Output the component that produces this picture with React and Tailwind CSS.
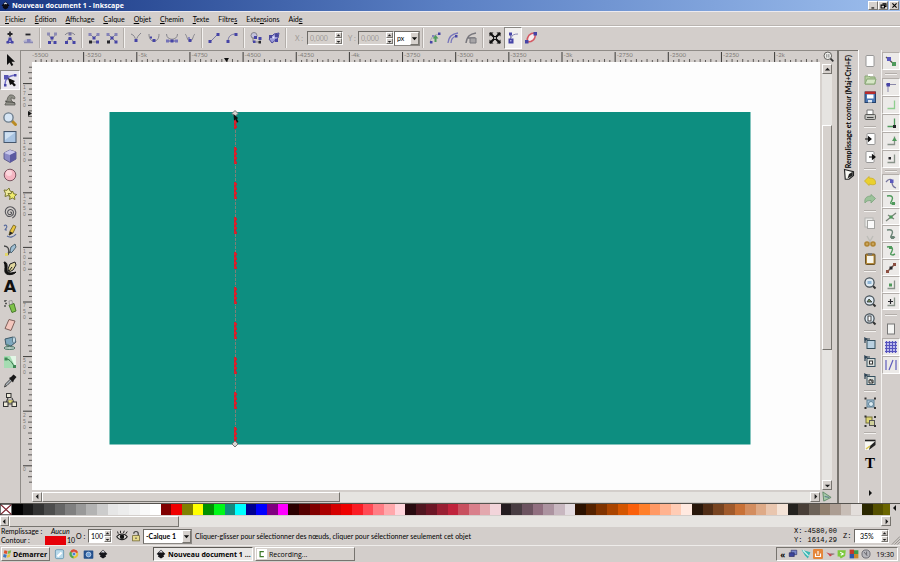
import React from "react";

const INK = "#26262b";
const NODE = "#4644a6";
const SOFT = "#85848c";
const GREEN = "#4f9a5c";

function Svg({ children, className = "h-4 w-4" }) {
  return (
    <svg viewBox="0 0 16 16" className={"shrink-0 " + className} fill="none" aria-hidden="true">
      {children}
    </svg>
  );
}

const Sq = ({ x, y, s = 3, c = NODE }) => <rect x={x} y={y} width={s} height={s} fill={c} />;
const Ln = ({ d, c = SOFT, w = 1, f = "none" }) => <path d={d} stroke={c} strokeWidth={w} fill={f} />;

const editIcons = {
  insert: <><Ln d="M8 1.500v5M5.500 4h5" c={INK} w={1.800} /><Ln d="M8 8L5 12.500h6z" c={NODE} f="#9a99cf" /><Sq x={6.500} y={7.500} /><Sq x={4.500} y={11} s={2.500} /><Sq x={9} y={11} s={2.500} /></>,
  remove: <><Ln d="M5.500 4.500h5" c={INK} w={1.800} /><path d="M3 12c1-4 9-4 10 0z" fill="#b7b5cf" /><Sq x={7} y={9} s={3.500} c="#8583bd" /><Ln d="M4 12.500h9" c="#8a89b4" w={1.500} /></>,
  breakNode: <><Ln d="M4 4l3 4M12 4l-3 4M8 9v3" /><Sq x={3} y={2.500} c="#8d8bb5" /><Sq x={10} y={2.500} c="#8d8bb5" /><Sq x={6.500} y={6.500} /><Sq x={4} y={11} /><Sq x={9.500} y={11} /></>,
  join: <><Ln d="M3 5c2-3 8-3 10 0M5 11l3-4 3 4" /><Sq x={6.500} y={2.500} c="#77759f" /><Sq x={6.500} y={7} /><Sq x={3} y={11} /><Sq x={10.500} y={11} /></>,
  joinSeg: <><Ln d="M4 4l3 3M12 4L9 7M5 12h6" c={SOFT} /><Sq x={2.500} y={3} c="#8482b8" /><Sq x={10.500} y={3} c="#8482b8" /><Sq x={6.500} y={6.500} /><Sq x={3} y={10.500} c={INK} /><Sq x={10} y={10.500} /></>,
  delSeg: <><Ln d="M4 4l8 8M12 4l-8 8" c={SOFT} /><Sq x={2.500} y={3} c="#8482b8" /><Sq x={10.500} y={3} c="#8482b8" /><Sq x={6.500} y={6.500} /><Sq x={3} y={10.500} c={INK} /><Sq x={10.500} y={10.500} /></>,
  cusp: <><Ln d="M3 4c3 1 4 3 5 7 1-4 2-5 5-8" /><Sq x={6.500} y={9} /></>,
  smooth: <><Ln d="M3 4c0 5 2 7 5 7s5-2 5-7" /><Sq x={6.500} y={9} /><Sq x={4} y={6.500} s={2} /></>,
  symmetric: <><Ln d="M2.500 4c0 7 11 7 11 0" /><Ln d="M3 11h10" c={NODE} /><Sq x={2} y={9.500} c="#7472b8" /><Sq x={6.500} y={9.500} /><Sq x={11} y={9.500} c="#7472b8" /></>,
  auto: <><Ln d="M3 4c2 1 2 7 5 7s3-6 5-7" /><Sq x={6.500} y={9} /><Sq x={6} y={7} s={2} c="#8b89bf" /></>,
  line: <><Ln d="M4 12l8-8" c="#7b79a5" /><Sq x={2.500} y={10} /><Sq x={10.500} y={3} /></>,
  curve: <><Ln d="M4 12c0-6 3-8 8-8" c="#7b79a5" /><Sq x={2.500} y={10} /><Sq x={10.500} y={3} /></>,
  objPath: <><circle cx="6" cy="5.500" r="3" fill="#c4c3dd" stroke={SOFT} /><Ln d="M5 7v5h7V8" c={SOFT} /><Sq x={6} y={6} /><Sq x={10.500} y={7} /><Sq x={5} y={10.500} s={2.500} /><Sq x={10.500} y={11} s={2.500} c={INK} /></>,
  strokePath: <><path d="M3 9l5-5 5-1-1 5-6 5z" fill="#9b9ad6" stroke="#4a489c" /><Sq x={3} y={5} s={3} c="#4a489c" /><Sq x={9} y={9} s={3} /><Sq x={9} y={4} s={3} c="#4a489c" /><Sq x={6.500} y={6.500} s={2} c="#e8e8ff" /></>,
  clipEdit: <><Ln d="M3 13c1-6 3-8 10-9" c="#a2a1b0" /><path d="M8.500 5l3 3.500h-2V12h-2V8.500h-2z" fill={GREEN} /><Sq x={3} y={11} s={2.500} /><Sq x={11} y={2.500} s={2.500} /><Sq x={5} y={5} s={2} c="#8583bd" /></>,
  maskEdit: <><Ln d="M3 13C4 6 7 4 13 3M6 13c0-4 2-6 5-7" c="#7775bb" w={1.300} /><Sq x={10} y={5} s={2.500} /></>,
  lpe: <><Ln d="M3 13C4 6 7 4 13 3M5 8h7" c="#77767c" w={1.500} /><path d="M7 8h6v5H7z" fill="#a6a4a6" stroke="#77767c" /></>,
  transform: <><path d="M3 3l3.500 3.500M13 3L9.500 6.500M3 13l3.500-3.500M13 13L9.500 9.500" stroke="#111" strokeWidth="2.200" /><path d="M2.500 2.500h4l-4 4zM13.500 2.500h-4l4 4zM2.500 13.500h4l-4-4zM13.500 13.500h-4l4-4z" fill="#111" /><Sq x={6} y={6} s={4} c="#111" /><Sq x={7.200} y={7.200} s={1.600} c="#fff" /></>,
  handles: <><Ln d="M6 8c1-3 3-4 7-4M5.500 4v8" c="#8886b6" /><Sq x={4} y={2.500} s={3} /><Sq x={3.500} y={8.500} s={5} /><Sq x={5} y={10} s={1.500} c="#a9a8e0" /></>,
  outline: <><path d="M4 12c0-6 2-9 8-9 1 6-2 9-8 9z" fill="#f6eef0" stroke="#d45a64" strokeWidth="1.600" /><Sq x={2} y={10} s={3.500} /><Sq x={10.500} y={2} s={3.500} /></>,
};

const toolIcons = [
  ["Sélecteur", <path d="M5 2v11l2.600-2.500L9.500 14l1.800-.9-1.800-3.300H13z" fill="#111" />],
  ["Nœuds", <><Ln d="M3 14C3 8 4 4 14 3" c="#6f6dc4" w={1.400} /><Sq x={2} y={3} s={4.500} c="#5654b4" /><Sq x={12} y={2} s={2.500} /><Sq x={2} y={12} s={2.500} /><path d="M6 6l7 3-1.500 1.500L14 13l-2 1.500-2-2.500-2 1z" fill="#111" /></>],
  ["Ajuster", <><path d="M3 12c2-1 2-8 5-9 3-.5 6 1.500 4.500 4-1.500 0-2-1.500-3.500-1 0 3 1 4 4 5v2H3z" fill="#8f8f87" stroke="#5c5c56" strokeWidth=".8" /><Ln d="M3 9c3 2 6 0 10 2" c="#4c4c47" /></>],
  ["Zoom", <><path d="M9.500 9.500l4 4" stroke="#b98a22" strokeWidth="3" strokeLinecap="round" /><circle cx="6.500" cy="6.500" r="4.600" fill="#d6e5f4" stroke="#6d7d8c" strokeWidth="1.400" /></>],
  ["Rectangle", <><rect x="2" y="2.500" width="12" height="11" fill="#a9c4e2" stroke="#45566c" /><path d="M3 3.500h10L3 11z" fill="#cfe0f1" /></>],
  ["Boîte 3D", <><path d="M2 5l6-3 6 2v7l-6 3.500L2 11z" fill="#8c8bc6" stroke="#4c4b80" strokeWidth=".8" /><path d="M2 5l6-3 6 2-6 3z" fill="#c9c8ec" /><path d="M8 7l6-3v7l-6 3.500z" fill="#5a59a0" /></>],
  ["Ellipse", <><circle cx="8" cy="8" r="5.800" fill="#f5b6c2" stroke="#7b5560" /><circle cx="7" cy="6" r="3" fill="#fbd6dc" /></>],
  ["Étoile", <><path d="M2 4l3 .3L7 2l1 3 2.500 1-2 2 .3 3L6 9.500 3 10.500l.5-3z" fill="#eeea9d" stroke="#7a7730" /><path d="M6 7.500l3 .2 1.500-2.700 1.200 2.800 3 .7-2.300 2 .5 3-2.600-1.500L7.500 13.500l.6-3z" fill="#f0ec6d" stroke="#7a7730" /></>],
  ["Spirale", <path d="M8 8.500c1-1.500 2.500.5 1 1.700-2 1.300-4-.7-3.200-2.900C7 4.500 11 5 11.500 8c.4 3.500-3.500 5.500-6 4C2.500 10 2.500 5.500 5.500 3.500 9 1.500 13.500 4 13.800 8c0 3-1.500 5-3.500 6" stroke="#55555a" strokeWidth="1.100" />],
  ["Crayon", <><Ln d="M2 3c2-2 4 0 2 2.500-1 1-2 1.500 1 1.500M5 13c3 2 7 1 9-2" c="#5a6c9c" w={1.200} /><path d="M7 12l1-4 3.500-6L14 3.500 11 10z" fill="#e9c53f" stroke="#6b5a1c" strokeWidth=".8" /><path d="M7 12.500l1-4 3 1.500z" fill="#222" /></>],
  ["Bézier", <><Ln d="M2 4c4 0 6 3 4 9M3 13c4 0 5-4 7-5" c="#484848" w={1.300} /><path d="M8 9l1-4 4-3 1 3-3 4-2 2z" fill="#9fbfd4" stroke="#4f6470" /><Sq x={3} y={11} c="#e2d46a" /></>],
  ["Calligraphie", <><path d="M2 2c4 0 3 5 3 8 1 4 5 3 9 2-2 3-10 4-11 0-.6-3 1-6-1-10z" fill="#111" stroke="#111" /><path d="M6 9l2-5 5-2 1 3-3 5-4 2z" fill="#ded49c" stroke="#222" /><path d="M7 11l3-4" stroke="#222" /></>],
  ["Texte", "A"],
  ["Aérographe", <><path d="M7 7l5-1.500 2 7.500-4 1.500z" fill="#7fc24a" stroke="#487a2c" /><path d="M7 3l3-.5.5 3L7.500 7z" fill="#d7d7d2" stroke="#777" strokeWidth=".6" /><Ln d="M2 3h2M3 5.500h2M2 8h2M4 2v1" c="#555" w={1.400} /></>],
  ["Gomme", <path d="M7 2.500l6 1.500-4 9.500-6-2z" fill="#f3c6bd" stroke="#7d5f5a" />],
  ["Seau", <><path d="M3 4l8-2 3 5-5 4-5-1z" fill="#7fa8bd" stroke="#3d5866" /><ellipse cx="12" cy="5" rx="1.600" ry="3.200" fill="#c4dce7" stroke="#3d5866" strokeWidth=".7" /><Ln d="M6 9c-1 2 1 4 1 4" c="#5f8d7a" w={1.600} /><ellipse cx="7.500" cy="13" rx="5.500" ry="1.500" fill="#b9cfc6" stroke="#4c7466" /></>],
  ["Dégradé", <><rect x="2" y="2" width="12" height="12" fill="#a5dcb2" /><path d="M8 2h6v12z" fill="#e3f6e6" /><Ln d="M4 5c3 0 5 2 8 7" c="#2f7146" /><Sq x={2.500} y={3.500} c="#3f8756" /><Sq x={11} y={11} c="#3f8756" /></>],
  ["Pipette", <><path d="M2.500 14l1-3 5-5 1.500 1.500-5 5z" fill="#aeb7bd" stroke="#444" /><path d="M7 5l2-1 2.500-2.500L14.500 4 12 7l-1 2.500z" fill="#191919" /></>],
  ["Connecteur", <><Ln d="M6 6L4 11M10 6l2 5M6 12h4" c="#444" w={1.200} /><rect x="4.500" y="1.500" width="4.500" height="4" fill="#ece9d8" stroke="#333" /><path d="M6 8h5v3H6z" fill="#e9e070" stroke="#666" strokeWidth=".6" /><rect x="1.500" y="10" width="4.500" height="4.500" fill="#ece9d8" stroke="#333" /><rect x="10" y="10" width="4.500" height="4.500" fill="#ece9d8" stroke="#333" /></>],
];

const Page = ({ x = 4, y = 2.500 }) => <rect x={x} y={y} width="8" height="11" rx="1" fill="#fdfdfd" stroke="#8d8d8d" strokeWidth=".9" />;
const Lens = ({ children }) => (
  <><path d="M11 11l2.500 2.500" stroke="#333" strokeWidth="2" /><circle cx="7.500" cy="7.500" r="4.600" fill="#dfeaf2" stroke="#3f4a52" strokeWidth="1.200" />{children}</>
);
const Clone = ({ children, c = "#b9d0e0" }) => (
  <><path d="M3 8V4h5" stroke="#2c4253" strokeWidth="1.200" /><path d="M2 2l4 2-3 2z" fill="#2c4253" /><rect x="5" y="5.500" width="8" height="8" fill={c} stroke="#35505f" />{children}</>
);

const commandIcons = [
  ["Nouveau", <Page />],
  ["Ouvrir", <><path d="M3 5h4l1 1h5v7H3z" fill="#b7cf9f" stroke="#8aa878" /><path d="M5 8h9l-1.500 5H3z" fill="#d6e6c6" stroke="#8aa878" /><path d="M6 3h5v2H6z" fill="#fff" /></>],
  ["Enregistrer", <><rect x="3" y="3" width="10.500" height="10.500" fill="#4b76b4" stroke="#24416b" /><rect x="3" y="2.500" width="10.500" height="2.500" fill="#b82a2a" /><rect x="5" y="5.500" width="6.500" height="4" fill="#fff" /><rect x="6" y="11" width="4" height="2.500" fill="#dfe7ef" /></>],
  ["Imprimer", <><path d="M5 3h6v5H5z" fill="#fff" stroke="#777" /><rect x="3" y="7.500" width="10.500" height="5" rx="1" fill="#c4c4c0" stroke="#5b5b58" /><Ln d="M5 10.500h6.500" c="#444" /></>],
  null,
  ["Importer", <><Page x={5} /><path d="M3 8h6M6.500 6v4l2.500-2z" stroke="#111" strokeWidth="1.200" fill="#111" /></>],
  ["Exporter", <><Page x={4} /><path d="M7 8h5M10.500 6v4l2.500-2z" stroke="#111" strokeWidth="1.200" fill="#111" /></>],
  null,
  ["Annuler", <path d="M2.500 8L7 3.500V5c4 0 7 1 6.500 6C12 12 10 12 7 11v1.500z" fill="#ead02e" stroke="#c9ae2a" strokeWidth=".8" />],
  ["Refaire", <path d="M13.500 7.500L9 3.500V5c-4 0-7 2-6 7 1-2 3-2.500 6-2.500V12z" fill="#9cc29a" stroke="#7ba37c" strokeWidth=".8" />],
  null,
  ["Copier", <><rect x="3" y="3" width="8" height="9" fill="#e9e9e7" stroke="#b4b4b2" /><rect x="5.500" y="5.500" width="7" height="8" fill="#fafafa" stroke="#a4a4a2" /></>],
  ["Couper", <><Ln d="M5 3l4 7M11 3L7 10" c="#bdbdb8" w={1.400} /><circle cx="5" cy="11" r="2" fill="#c9a35a" stroke="#b08432" strokeWidth="1.600" /><circle cx="11" cy="11" r="2" fill="#c9a35a" stroke="#b08432" strokeWidth="1.600" /></>],
  ["Coller", <><rect x="3.500" y="3" width="9.500" height="10.500" rx="1" fill="#b4893a" stroke="#6b5225" /><rect x="5" y="5" width="6.500" height="7" fill="#f6f4ea" /><rect x="6" y="2" width="4" height="2.500" fill="#777" /></>],
  null,
  ["Zoom sélection", <Lens><rect x="5.500" y="6" width="4" height="3" fill="#8fb4d4" /></Lens>],
  ["Zoom dessin", <Lens><path d="M5 9l2-3 3 3z" fill="#6f8f5c" stroke="#333" strokeWidth=".8" /></Lens>],
  ["Zoom page", <Lens><rect x="6" y="5" width="3" height="5" fill="#fff" stroke="#444" /></Lens>],
  null,
  ["Dupliquer", <Clone />],
  ["Cloner", <Clone c="#d8dcd8"><rect x="7.500" y="8" width="3" height="3" fill="#fff" stroke="#333" /></Clone>],
  ["Délier", <Clone c="#d8dcd8"><path d="M7 12V9h4v3z" stroke="#333" /><path d="M8 8l3 4" stroke="#333" /></Clone>],
  null,
  ["Grouper", <><rect x="5" y="5" width="7" height="7" fill="#a9c4d8" stroke="#5d7f94" /><circle cx="9" cy="9" r="2.500" fill="#dcebf2" stroke="#5d7f94" /><Sq x={2.500} y={2.500} s={2} c="#333" /><Sq x={12} y={2.500} s={2} c="#333" /><Sq x={2.500} y={12} s={2} c="#333" /><Sq x={12} y={12} s={2} c="#333" /></>],
  ["Dégrouper", <><rect x="4" y="4" width="6" height="6" fill="#ddd574" stroke="#77723a" /><rect x="7.500" y="7.500" width="5" height="5" fill="#cfcf9a" stroke="#555" /><Sq x={2.500} y={2.500} s={2} c="#333" /><Sq x={12} y={3} s={2} c="#333" /><Sq x={2.500} y={12} s={2} c="#333" /><Sq x={12} y={12} s={2} c="#333" /></>],
  null,
  ["Remplissage", <><path d="M3 4h10v3l-5 6H3z" fill="#f7f7f2" /><path d="M13.500 4v4L7 13l1-4z" fill="#222" /><path d="M3 3.500h10.500" stroke="#222" strokeWidth="1.600" /><path d="M4 12l4-3" stroke="#d8c34a" strokeWidth="1.500" /></>],
  ["Texte", "T"],
];

const Corner = ({ a = GREEN, children }) => (
  <><Ln d="M11.500 3.500v8H4.500" c="#89938a" w={1.300} />{children || <Sq x={10} y={10} s={3} c={a} />}</>
);
const Swoop = ({ c = GREEN, x, y }) => (
  <><Ln d="M4 4c6-1 6 2 5 4-1 2.500-3 4 1 4l2-1" c={c} w={1.400} /><Sq x={x} y={y} s={3} c={c} /></>
);

const snapTop = [
  ["Boîtes", <><Ln d="M3 5.500h10M5 4v9" c="#8b89aa" /><Sq x={3.500} y={4} s={3.500} /></>],
  ["Bords", <Ln d="M11.500 3.500v8H4.500" c="#8fce8f" w={1.300} />],
  ["Coins", <><Ln d="M11.500 3.500v8H4.500" c={GREEN} w={1.300} /><Sq x={10} y={10} s={3} c={INK} /></>],
  ["Milieux", <Corner><path d="M11.500 4l2.500 4H9z" fill={GREEN} /></Corner>],
  ["Centres", <Corner><Sq x={5.500} y={6} s={2.500} c={INK} /></Corner>],
];
const snapMid = [
  ["Nœuds", <><Ln d="M3 7c3-4 6-3 6 0 0 3 1 5 4 6" c="#76759c" w={1.300} /><Sq x={7} y={4.500} s={3.500} c="#5b59bd" /></>],
  ["Chemins", <Swoop x={9} y={10} />],
  ["Intersections", <><Ln d="M3 12L13 4M5 6l6 4" c="#798579" w={1.300} /><Sq x={6.500} y={6.500} s={3} c={GREEN} /></>],
  ["Points de rebroussement", <Swoop x={8} y={10} c="#6c8577" />],
  ["Nœuds doux", <Swoop x={6} y={3} c={GREEN} />],
  ["Milieux de ligne", <><Ln d="M4 12l8-8" c="#7c5c50" w={1.500} /><Sq x={3} y={10} s={3} c="#8c4f42" /><Sq x={10} y={3} s={3} c="#8c4f42" /><Sq x={6.500} y={6.500} s={3} c={INK} /></>],
  ["Centres d'objet", <Corner><Sq x={6} y={6.500} s={3} c={GREEN} /></Corner>],
  ["Centres de rotation", <Corner><Ln d="M7.500 5v5M5 7.500h5" c={INK} w={1.200} /></Corner>],
];

const bevelUp = "border border-t-white border-l-white border-r-[#77746f] border-b-[#77746f] bg-[#d6d1cd]";

function IconButton({ label, children, className = "" }) {
  return (
    <button type="button" aria-label={label} className={"flex shrink-0 items-center justify-center " + className}>
      {children}
    </button>
  );
}

function ToolGroup({ names }) {
  return (
    <div className="flex">
      {names.map((n) => (
        <IconButton key={n} label={n} className={n === "handles" ? "h-[22px] w-[18px] border border-b-white border-r-white border-l-[#8b8884] border-t-[#8b8884] bg-[#f1efee]" : "h-[22px] w-[18px]"}>
          <Svg>{editIcons[n]}</Svg>
        </IconButton>
      ))}
    </div>
  );
}

const VSep = () => <div className="mx-[2px] h-5 w-[2px] shrink-0 border-l border-r border-l-[#b3aeaa] border-r-[#f4f2f0]" />;
const HSep = ({ className = "my-[2px]" }) => <div className={"h-[2px] w-3 shrink-0 border-t border-b border-t-[#b3aeaa] border-b-[#f4f2f0] " + className} />;

function Arrow({ dir, label, className = "" }) {
  const d = { up: "M1 5l3-3 3 3z", down: "M1 3l3 3 3-3z", left: "M5 1L2 4l3 3z", right: "M3 1l3 3-3 3z" }[dir];
  return (
    <button type="button" aria-label={label} className={"flex shrink-0 items-center justify-center " + bevelUp + " " + className}>
      <svg viewBox="0 0 8 8" className="h-[7px] w-[7px]" aria-hidden="true"><path d={d} fill="#1b1b1b" /></svg>
    </button>
  );
}

function Spin({ id, value, className, muted }) {
  return (
    <div className={"flex h-[14px] border border-t-[#6d6a66] border-l-[#6d6a66] border-b-white border-r-white " + (muted ? "bg-[#d6d1cd]" : "bg-white")}>
      <input id={id} defaultValue={value} className={"min-w-0 bg-transparent pl-[2px] text-[7px] leading-3 outline-none " + (muted ? "text-[#9d9995] " : "text-black ") + className} />
      <div className="flex w-[7px] flex-col">
        <Arrow dir="up" label="Augmenter" className="h-[6px] w-full overflow-hidden" />
        <Arrow dir="down" label="Diminuer" className="h-[6px] w-full overflow-hidden" />
      </div>
    </div>
  );
}

function Drop({ id, label, options, className }) {
  return (
    <div className="flex h-[15px] border border-t-[#6d6a66] border-l-[#6d6a66] border-b-[#8b8884] border-r-[#8b8884] bg-white">
      <select id={id} aria-label={label} className={"appearance-none bg-white pl-[2px] text-[7px] leading-3 outline-none " + className}>
        {options.map((o) => <option key={o}>{o}</option>)}
      </select>
      <span className={"flex w-[9px] items-center justify-center " + bevelUp}>
        <svg viewBox="0 0 8 8" className="h-[7px] w-[7px]" aria-hidden="true"><path d="M1 2.500h6L4 6z" fill="#111" /></svg>
      </span>
    </div>
  );
}

const MENUS = [["F", "ichier"], ["É", "dition"], ["A", "ffichage"], ["C", "alque"], ["O", "bjet"], ["C", "hemin"], ["T", "exte"], ["", "Filtre", "s"], ["", "Exte", "n", "sions"], ["", "Aid", "e"]];

const H_LABELS = ["-5500", "-5250", "-5k", "-4750", "-4500", "-4250", "-4k", "-3750", "-3500", "-3250", "-3k", "-2750", "-2500", "-2250", "-2k"];
const V_LABELS = ["1750", "1500", "1250", "1000", "750", "500", "250", "0"];

function HorizontalRuler() {
  const step = 53.15;
  const ticks = Array.from({ length: 149 }, (_, i) => ({ x: -1.500 + (i * step) / 10, i }));
  return (
    <svg className="h-3 w-full" aria-hidden="true">
      {ticks.map(({ x, i }) => (
        <path key={i} d={`M${x} ${i % 10 === 0 ? 1 : i % 2 === 0 ? 8 : 9}V12`} stroke="#3b3a38" strokeWidth={i % 10 === 0 ? 1 : 0.8} />
      ))}
      {H_LABELS.map((t, i) => (
        <text key={t} x={i * step} y="6" fontSize="6" fill="#7d7a76">{t}</text>
      ))}
      <path d="M192 7h5l-2.500 4z" fill="#111" />
    </svg>
  );
}

function VerticalRuler() {
  const step = 54.600;
  const ticks = Array.from({ length: 84 }, (_, i) => ({ y: -33 + (i * step) / 10, i })).filter((t) => t.y > 0 && t.y < 428);
  return (
    <svg className="h-full w-[11px]" aria-hidden="true">
      {ticks.map(({ y, i }) => (
        <path key={i} d={`M${i % 10 === 0 ? 2 : i % 2 === 0 ? 7 : 8} ${y}H11`} stroke="#3b3a38" strokeWidth={i % 10 === 0 ? 1 : 0.8} />
      ))}
      {V_LABELS.map((t, n) =>
        t.split("").map((ch, k) => (
          <text key={n + "-" + k} x="2" y={27 + n * step + k * 6} fontSize="5" fontFamily="Liberation Sans, sans-serif" fill="#7a7773">{ch}</text>
        ))
      )}
      <path d="M7 49v5l4-2.500z" fill="#111" />
    </svg>
  );
}

function Drawing() {
  const dashes = Array.from({ length: 10 }, (_, i) => i);
  return (
    <svg className="h-full w-full" role="img" aria-label="Dessin">
      <rect x="77.500" y="50" width="641" height="332.500" fill="#0d8e80" />
      <path d="M203.500 52V382" stroke="#7d7f76" strokeWidth="1" strokeDasharray="3 1" />
      {dashes.map((i) => {
        const y = 50 + i * 35;
        const top = i === 0 ? y + 8 : y;
        const h = i === 0 ? 9 : i === 9 ? 16 : 17;
        return (
          <g key={i}>
            <rect x="202" y={top} width="2" height={h} fill="#cf1f2b" />
            <path d={`M204.500 ${top + 1}V${top + h}`} stroke="#cf1f2b" strokeDasharray="2.500 2" />
            <path d={`M203 ${top + 1}V${top + h}`} stroke="#e8262e" strokeDasharray="2 2.500" />
          </g>
        );
      })}
      <path d="M203 48.500l3 3-3 3-3-3z" fill="#d6d6d2" stroke="#77777a" />
      <path d="M203 379l3 3-3 3-3-3z" fill="#d6d6d2" stroke="#77777a" />
      <path d="M201.500 52l4.500 4-1 1 1.500 3-1.500.5-1.500-3-1.500 1z" fill="#111" />
    </svg>
  );
}

const PALETTE = ["#000000", "#1a1a1a", "#333333", "#4d4d4d", "#666666", "#808080", "#999999", "#b3b3b3", "#cccccc", "#e6e6e6", "#ececec", "#f2f2f2", "#f9f9f9", "#ffffff",
  "#800000", "#f00000", "#808000", "#ffff00", "#009000", "#00f818", "#128c80", "#00ffff", "#000090", "#0000ff", "#800080", "#ff00ff",
  "#2b0000", "#550000", "#800000", "#aa0000", "#d40000", "#ee0000", "#fa1c24", "#ff4a55", "#ff7d85", "#ffa8ac", "#ffd5dc",
  "#280b10", "#501620", "#6c1626", "#991f33", "#c0233c", "#c8505f", "#d97f8b", "#e3a8ae", "#f2d4da",
  "#241c20", "#483c42", "#6c5360", "#916f80", "#ac93a0", "#c8b7c0", "#e3dbe0",
  "#2b1100", "#552200", "#803300", "#aa4400", "#d45500", "#fa5f0a", "#ff7f2a", "#ff9965", "#ffb390", "#ffccb5", "#ffe9e0",
  "#28170b", "#502d16", "#784421", "#a05a2c", "#c87137", "#d38d5f", "#deaa87", "#e9c6af", "#f4e3d7",
  "#24221f", "#483e37", "#6c6258", "#91806f", "#ac9d93", "#c8beb7", "#e3dedb",
  "#2b2800", "#555000"];

function ColumnGroup({ items, cell }) {
  return items.map((it, i) =>
    it === null ? <HSep key={i} /> : (
      <IconButton key={i} label={it[0]} className={cell}>
        {typeof it[1] === "string"
          ? <span className="font-['Liberation_Serif',serif] text-[15px] font-bold leading-4 text-black">{it[1]}</span>
          : <Svg>{it[1]}</Svg>}
      </IconButton>
    )
  );
}

const snapCell = "w-full border border-t-[#b3aeaa] border-l-[#b3aeaa] border-b-white border-r-white bg-[#eceae8]";

function TitleBar() {
  return (
    <header className="flex h-[11px] shrink-0 items-center bg-linear-to-r from-[#1a3783] via-[#5b80c4] to-[#9cbdec] pl-px pr-px text-white">
      <svg viewBox="0 0 16 16" className="h-[9px] w-[9px]" aria-hidden="true"><path d="M8 1l7 7-3 2 1 2-5 3-5-3 1-2-3-2z" fill="#0b0b12" /><path d="M8 2l3 3-2 1-1-1-2 1-1-1z" fill="#dfe6f2" /></svg>
      <h1 className="ml-[2px] font-['Open_Sans',sans-serif] text-[7px] font-bold leading-[10px]">Nouveau document 1 - Inkscape</h1>
      <div className="ml-auto flex">
        {[["Réduire", "M2 8.500h4"], ["Restaurer", "M3.500 2.500h5v4h-2M1.500 4.500h5v4h-5z"], ["Fermer", "M2 2l6 6M8 2L2 8"]].map(([n, d]) => (
          <button key={n} type="button" aria-label={n} className={"flex h-[9px] w-[10px] items-center justify-center last:ml-px " + bevelUp}>
            <svg viewBox="0 0 10 10" className="h-[7px] w-[7px]" aria-hidden="true"><path d={d} stroke="#000" strokeWidth="1.600" fill="none" /></svg>
          </button>
        ))}
      </div>
    </header>
  );
}

function Canvas() {
  return (
    <section className="flex min-w-0 flex-1 flex-col border-l border-t border-[#8f8b87]">
      <div className="flex h-[11px] shrink-0">
        <div className="w-[11px] shrink-0" />
        <div className="min-w-0 flex-1 overflow-hidden"><HorizontalRuler /></div>
        <IconButton label="Zoom lié" className="w-[17px]">
          <svg viewBox="0 0 16 16" className="h-[11px] w-[11px]" aria-hidden="true"><circle cx="7" cy="7" r="5.500" fill="#efefec" stroke="#55534f" strokeWidth="1.300" /><path d="M11 11l4 4" stroke="#333" strokeWidth="2.500" /><path d="M5.500 4.500v5M8.500 4.500v5" stroke="#555" /></svg>
        </IconButton>
      </div>
      <div className="flex min-h-0 flex-1">
        <div className="w-[11px] shrink-0 overflow-hidden"><VerticalRuler /></div>
        <div className="min-w-0 flex-1 bg-[#fdfdfd]"><Drawing /></div>
        <div className="flex w-[17px] flex-col items-center bg-[#d6d1cd] pl-[2px] pr-[5px] pt-[2px]">
          <Arrow dir="up" label="Défiler vers le haut" className="h-[10px] w-full" />
          <div className="flex w-full flex-1 flex-col bg-[#e6e4e1]">
            <div className="flex-[51]" />
            <div className={"flex-[225] " + bevelUp} />
            <div className="flex-[131]" />
          </div>
          <Arrow dir="down" label="Défiler vers le bas" className="h-[10px] w-full" />
        </div>
      </div>
      <div className="flex h-[13px] shrink-0 items-center">
        <div className="w-[11px] shrink-0" />
        <Arrow dir="left" label="Défiler à gauche" className="h-[10px] w-[10px]" />
        <div className="flex h-[10px] flex-1 bg-[#e6e4e1]">
          <div className={"flex-[297] " + bevelUp} />
          <div className="flex-[471]" />
        </div>
        <Arrow dir="right" label="Défiler à droite" className="h-[10px] w-[10px]" />
        <IconButton label="Gestion des couleurs" className="w-[17px] pr-[4px]">
          <svg viewBox="0 0 12 12" className="h-[11px] w-[11px]" aria-hidden="true"><path d="M2 1l9 6-8 4z" fill="#a5c9a8" stroke="#5f8a68" /><path d="M4 6l5 1" stroke="#4e6b85" /></svg>
        </IconButton>
      </div>
    </section>
  );
}

export default function App() {
  return (
    <div className="flex h-screen w-full flex-col overflow-hidden bg-[#d3cecb] font-['Lato','Noto_Sans',sans-serif] text-[7px] leading-[9px] text-black">
      <TitleBar />

      <nav className="flex h-[15px] shrink-0 items-center gap-[9px] border-b border-t border-b-[#b9b4b0] border-t-[#eceaf0] pl-[5px] pt-px">
        {MENUS.map((m, i) => (
          <button key={i} type="button" className="shrink-0">
            {m[0] && <u>{m[0]}</u>}{m[1]}{m[2] && <u>{m[2]}</u>}{m[3]}
          </button>
        ))}
      </nav>

      <div className="flex h-6 shrink-0 items-center border-t border-white pb-px pl-px">
        <ToolGroup names={["insert", "remove"]} /><VSep />
        <ToolGroup names={["breakNode", "join"]} /><VSep />
        <ToolGroup names={["joinSeg", "delSeg"]} /><VSep />
        <ToolGroup names={["cusp", "smooth", "symmetric", "auto"]} /><VSep />
        <ToolGroup names={["line", "curve"]} /><VSep />
        <ToolGroup names={["objPath", "strokePath"]} /><VSep />
        <label htmlFor="pos-x" className="w-[18px] pl-[6px] text-[#9d9995]">X :</label>
        <Spin id="pos-x" value="0,000" muted className="w-[27px]" />
        <label htmlFor="pos-y" className="w-[15px] pl-[5px] text-[#9d9995]">Y :</label>
        <Spin id="pos-y" value="0,000" muted className="w-[27px]" />
        <Drop id="unit" label="Unité" options={["px", "mm", "cm"]} className="w-[15px]" />
        <VSep />
        <ToolGroup names={["clipEdit", "maskEdit", "lpe"]} /><VSep />
        <ToolGroup names={["transform", "handles", "outline"]} />
      </div>

      <main className="flex min-h-0 flex-1">
        <aside className="w-5 shrink-0 border-t border-[#b9b4b0]">
          <div className="flex h-[358px] flex-col">
            {toolIcons.map(([name, art], i) => (
              <button key={name} type="button" aria-label={name} className={"flex min-h-0 flex-1 items-center justify-center " + (i === 1 ? "border border-b-white border-r-white border-l-[#8b8884] border-t-[#8b8884] bg-[#ebe9f0]" : "")}>
                {typeof art === "string"
                  ? <span className="font-['DejaVu_Sans',sans-serif] text-[16px] font-bold leading-4 text-[#111]">{art}</span>
                  : <Svg>{art}</Svg>}
              </button>
            ))}
          </div>
        </aside>

        <Canvas />

        <aside className="flex w-[21px] shrink-0 flex-col items-center border-l-2 border-t border-l-[#77746f] border-t-[#77746f] pt-[4px]">
          <h2 className="rotate-180 whitespace-nowrap font-bold [writing-mode:vertical-rl]">Remplissage et contour (Maj+Ctrl+F)</h2>
          <Svg className="h-3 w-3"><path d="M2 2l12 3v5l-6 5H3z" fill="#f7f7f2" stroke="#222" strokeWidth="1.500" /><path d="M13 5v5l-7 4 2-6z" fill="#222" /></Svg>
        </aside>

        <aside className="flex w-[23px] shrink-0 flex-col items-center border-l border-l-white pt-[2px]">
          <ColumnGroup items={commandIcons} cell="h-[18px] w-5" />
          <button type="button" aria-label="Plus de commandes" className="mt-auto mb-[6px]">
            <svg viewBox="0 0 8 8" className="h-2 w-2" aria-hidden="true"><path d="M3 1l3 3-3 3z" fill="#111" /></svg>
          </button>
        </aside>

        <aside className="flex w-[19px] shrink-0 flex-col items-center border-l border-l-[#f4f2f0] pt-[2px]">
          <IconButton label="Magnétisme" className={"h-[18px] " + snapCell}>
            <Svg><Ln d="M3 4l9 8" c="#55534f" w={1.300} /><Sq x={4} y={4} s={4} c="#5b59bd" /><Sq x={9} y={9} s={4} c={GREEN} /></Svg>
          </IconButton>
          <HSep className="my-[3px]" />
          <ColumnGroup items={snapTop} cell={"h-[18px] " + snapCell} />
          <HSep className="my-[2px]" />
          <ColumnGroup items={snapMid} cell={"h-[17px] " + snapCell} />
          <HSep className="my-[4px]" />
          <IconButton label="Bordure de page" className="h-[18px] w-full"><Svg><rect x="4.500" y="3" width="7" height="10" fill="#f5f5f3" stroke="#777" /></Svg></IconButton>
          <IconButton label="Grilles" className={"h-[18px] " + snapCell}>
            <Svg><rect x="2.500" y="2.500" width="11" height="11" fill="#c9c8f2" /><path d="M3.500 2v12M6.500 2v12M9.500 2v12M12.500 2v12M2 3.500h12M2 6.500h12M2 9.500h12M2 12.500h12" stroke="#5553bd" strokeWidth="1.200" /></Svg>
          </IconButton>
          <IconButton label="Guides" className={"h-[18px] " + snapCell}>
            <Svg><path d="M3 3v10M13 3v10M6 13l4-10" stroke="#5f5dbd" strokeWidth="1.200" /></Svg>
          </IconButton>
        </aside>
      </main>

      <div className="flex h-[12px] shrink-0 border-t border-[#55534f]">
        <button type="button" aria-label="Aucune couleur" className="w-3 shrink-0 bg-white">
          <svg viewBox="0 0 12 11" className="h-[11px] w-3" aria-hidden="true"><path d="M0 0l12 11M12 0L0 11" stroke="#7b1f2b" strokeWidth="1.200" /><rect x=".5" y=".5" width="11" height="10" fill="none" stroke="#333" strokeWidth=".7" /></svg>
        </button>
        <div className="flex min-w-0 flex-1">
          {PALETTE.map((c, i) => <button key={i} type="button" aria-label={c} className="min-w-0 flex-[3]" style={{ backgroundColor: c }} />)}
          <button type="button" aria-label="#6b6600" className="min-w-0 flex-[2] bg-[#6b6600]" />
        </div>
        <button type="button" aria-label="Menu de palette" className="flex w-[10px] items-start justify-center">
          <svg viewBox="0 0 8 8" className="h-2 w-2" aria-hidden="true"><path d="M5 1L2 4l3 3z" fill="#111" /></svg>
        </button>
      </div>
      <div className="flex h-[12px] shrink-0 items-center pr-[9px]">
        <Arrow dir="left" label="Palette à gauche" className="h-[10px] w-[9px]" />
        <div className="flex h-[11px] flex-1 bg-[#e6e4e1]">
          <div className={"flex-[169] " + bevelUp} />
          <div className="flex-[705]" />
        </div>
        <Arrow dir="right" label="Palette à droite" className="h-[10px] w-[10px]" />
      </div>

      <div className="flex h-[18px] shrink-0 items-center pl-px">
        <div className="w-[44px] shrink-0 whitespace-nowrap"><div>Remplissage :</div><div>Contour :</div></div>
        <div className="w-[31px] shrink-0">
          <div className="pl-[6px] italic">Aucun</div>
          <div className="flex gap-px"><span className="h-[9px] w-[21px] bg-[#e60008]" /><span>10</span></div>
        </div>
        <label htmlFor="opacity" className="w-3">O :</label>
        <Spin id="opacity" value="100" className="w-[15px]" />
        <div className="ml-[3px] flex">
          <IconButton label="Visibilité du calque" className="w-[14px]">
            <Svg className="h-3 w-3"><path d="M1 9c3-5 11-5 14 0-3 5-11 5-14 0z" fill="#e9e7e4" stroke="#222" strokeWidth="1.500" /><circle cx="8" cy="9" r="3" fill="#111" /><path d="M3 5L2 2M6 4V1M10 4l1-3M13 5l2-3" stroke="#222" strokeWidth="1.300" /></Svg>
          </IconButton>
          <IconButton label="Verrouiller le calque" className="w-[14px]">
            <Svg className="h-3 w-3"><path d="M5 5c0-4 6-4 6 0v3" stroke="#444" strokeWidth="1.600" /><rect x="3.500" y="7.500" width="9" height="7" fill="#e5d98b" stroke="#6d6430" /><path d="M8 10v2" stroke="#444" strokeWidth="1.500" /></Svg>
          </IconButton>
        </div>
        <Drop id="layer" label="Calque" options={["-Calque 1"]} className="w-[38px] font-bold" />
        <p className="ml-[3px] min-w-0 flex-1 truncate">Cliquer-glisser pour sélectionner des nœuds, cliquer pour sélectionner seulement cet objet</p>
        <dl className="grid grid-cols-[auto_auto] gap-x-px text-right font-['Liberation_Mono',monospace] text-[7px] leading-[9px]">
          <dt>X:</dt><dd>-4580,00</dd><dt>Y:</dt><dd>1614,29</dd>
        </dl>
        <label htmlFor="zoom" className="ml-[6px] w-[11px] font-['Liberation_Mono',monospace]">Z:</label>
        <Spin id="zoom" value="35%" className="w-[26px] pl-[5px]" />
        <svg viewBox="0 0 10 10" className="ml-[2px] h-[10px] w-[9px] self-end" aria-hidden="true"><path d="M1 10l9-9M4 10l6-6M7 10l3-3" stroke="#8b8884" /></svg>
      </div>

      <footer className="flex h-[17px] shrink-0 items-center border-t border-[#eeecea] pl-px pr-[2px] font-['Open_Sans',sans-serif]">
        <button type="button" className={"flex h-[14px] w-[49px] items-center gap-px pl-px font-bold " + bevelUp}>
          <svg viewBox="0 0 12 12" className="h-[10px] w-[9px] shrink-0" aria-hidden="true"><path d="M2 1l4 1-1 4-4-1z" fill="#e1532c" /><path d="M7 2l4-1-1 4-4 1z" fill="#7ab648" /><path d="M1 6l4 1-1 4-4-1z" fill="#3f78c4" /><path d="M6 7l4-1-1 4-4 1z" fill="#e9c53f" /></svg>
          Démarrer
        </button>
        <div className="ml-[2px] flex">
          <IconButton label="Bureau" className="w-[15px]"><Svg className="h-[11px] w-[11px]"><rect x="2" y="1" width="12" height="13" rx="2" fill="#b9d9ea" stroke="#4f86a6" /><path d="M5 11l6-6" stroke="#fff" strokeWidth="3" /></Svg></IconButton>
          <IconButton label="Chrome" className="w-[14px]"><Svg className="h-[10px] w-[10px]"><circle cx="8" cy="8" r="7" fill="#e2c43a" /><path d="M8 8L2 4a7 7 0 0 1 12.500 1z" fill="#d84a38" /><path d="M8 8l-1 7A7 7 0 0 1 2 4z" fill="#4fa552" /><circle cx="8" cy="8" r="3" fill="#4a83d4" stroke="#fff" /></Svg></IconButton>
          <IconButton label="Capture" className="w-[15px]"><Svg className="h-[11px] w-[11px]"><rect x="1" y="2" width="14" height="12" rx="1" fill="#24508c" /><circle cx="8" cy="8" r="3.500" fill="#6fa0d8" stroke="#dce8f5" /></Svg></IconButton>
          <IconButton label="Inkscape" className="w-[14px]"><Svg className="h-[10px] w-[10px]"><path d="M8 1l7 7-3 2 1 2-5 3-5-3 1-2-3-2z" fill="#15151a" /><path d="M8 2l3 3-2 1-1-1-2 1-1-1z" fill="#dcdce2" /></Svg></IconButton>
        </div>
        <button type="button" className="ml-[43px] flex h-[14px] w-[100px] items-center gap-[2px] border border-t-[#5b5955] border-l-[#5b5955] border-b-white border-r-white bg-[#e9e7e5] pl-[2px] font-bold">
          <Svg className="h-[10px] w-[10px]"><path d="M8 1l7 7-3 2 1 2-5 3-5-3 1-2-3-2z" fill="#15151a" /><path d="M8 2l3 3-2 1-1-1-2 1-1-1z" fill="#dcdce2" /></Svg>
          <span className="whitespace-nowrap">Nouveau document 1 ...</span>
        </button>
        <button type="button" className={"ml-[2px] flex h-[14px] w-[100px] items-center gap-[2px] pl-px " + bevelUp}>
          <Svg className="h-[10px] w-[10px]"><rect width="16" height="16" fill="#fff" /><path d="M11 4H5v8h6" stroke="#3f7a2c" strokeWidth="2" /></Svg>
          Recording...
        </button>
        <div className="ml-auto flex h-[14px] items-center border border-t-[#77746f] border-l-[#77746f] border-b-white border-r-white pl-[2px] pr-[3px]">
          <button type="button" aria-label="Afficher les icônes" className="w-[7px] text-[8px] font-bold">«</button>
          <Svg className="mx-[2px] h-[10px] w-[10px]"><path d="M5 2h9v7H5z" fill="#7885c9" stroke="#2c2f6c" /><path d="M2 6h8v6H2z" fill="#3d459c" stroke="#22255c" /></Svg>
          <Svg className="mx-px h-[10px] w-[10px]"><path d="M1 1l14 4-4 10-5-5z" fill="#39b8b4" /><path d="M3 2l9 9" stroke="#d6f4f2" strokeWidth="2" /></Svg>
          <Svg className="mx-px h-[10px] w-[10px]"><rect x="0" y="0" width="16" height="16" rx="2" fill="#e5853a" /><path d="M8 3v6M4 7v5h8V7" stroke="#fff" strokeWidth="1.800" /></Svg>
          <Svg className="mx-px h-[10px] w-[10px]"><path d="M2 5l5 2 7 1-6 4-2-3z" fill="#c9404a" /><path d="M9 8h6" stroke="#8a8a8a" strokeWidth="2" /></Svg>
          <Svg className="mx-px h-[10px] w-[10px]"><path d="M1 2h13l-1 9-7 4-2-3H1z" fill="#7dc93d" /><path d="M5 5l5 3-4 2" stroke="#fff" strokeWidth="1.800" /></Svg>
          <Svg className="mx-px h-[10px] w-[10px]"><path d="M1 1h7v7H1z" fill="#c13b2b" /><path d="M8 2h7v6H8z" fill="#3b9c4a" /><path d="M1 8h7v7H1z" fill="#2f57a8" /><path d="M8 8h7v7H8z" fill="#c98a2c" /></Svg>
          <Svg className="mx-px h-[10px] w-[10px]"><circle cx="8" cy="8" r="6.500" fill="#b5b5bb" stroke="#6a6a72" strokeWidth="1.500" /><path d="M5 5l5 6M9 4v5" stroke="#55555c" strokeWidth="1.300" /></Svg>
          <time className="ml-[4px]">19:30</time>
        </div>
      </footer>
    </div>
  );
}
